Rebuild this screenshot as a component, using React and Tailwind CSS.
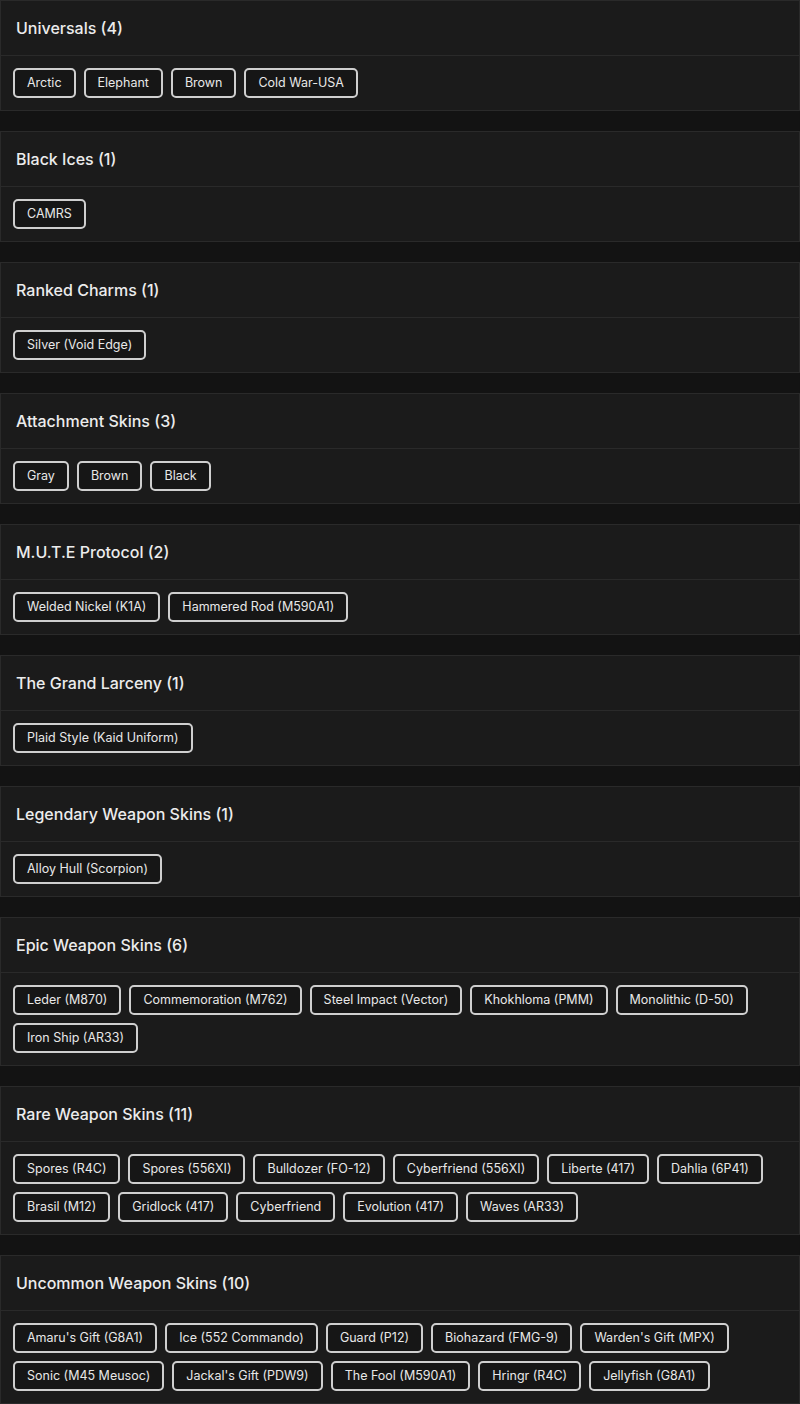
import React from "react";

const sections = [
  { title: "Universals (4)", items: ["Arctic", "Elephant", "Brown", "Cold War-USA"] },
  { title: "Black Ices (1)", items: ["CAMRS"] },
  { title: "Ranked Charms (1)", items: ["Silver (Void Edge)"] },
  { title: "Attachment Skins (3)", items: ["Gray", "Brown", "Black"] },
  { title: "M.U.T.E Protocol (2)", items: ["Welded Nickel (K1A)", "Hammered Rod (M590A1)"] },
  { title: "The Grand Larceny (1)", items: ["Plaid Style (Kaid Uniform)"] },
  { title: "Legendary Weapon Skins (1)", items: ["Alloy Hull (Scorpion)"] },
  {
    title: "Epic Weapon Skins (6)",
    items: [
      "Leder (M870)",
      "Commemoration (M762)",
      "Steel Impact (Vector)",
      "Khokhloma (PMM)",
      "Monolithic (D-50)",
      "Iron Ship (AR33)",
    ],
  },
  {
    title: "Rare Weapon Skins (11)",
    items: [
      "Spores (R4C)",
      "Spores (556XI)",
      "Bulldozer (FO-12)",
      "Cyberfriend (556XI)",
      "Liberte (417)",
      "Dahlia (6P41)",
      "Brasil (M12)",
      "Gridlock (417)",
      "Cyberfriend",
      "Evolution (417)",
      "Waves (AR33)",
    ],
  },
  {
    title: "Uncommon Weapon Skins (10)",
    items: [
      "Amaru's Gift (G8A1)",
      "Ice (552 Commando)",
      "Guard (P12)",
      "Biohazard (FMG-9)",
      "Warden's Gift (MPX)",
      "Sonic (M45 Meusoc)",
      "Jackal's Gift (PDW9)",
      "The Fool (M590A1)",
      "Hringr (R4C)",
      "Jellyfish (G8A1)",
    ],
  },
];

export default function App() {
  return (
    <div
      className="min-h-[1404px] w-[800px] bg-[#131313] flex flex-col gap-5 text-[#e6e6e6]"
      style={{ fontFamily: "Inter, 'Open Sans', sans-serif" }}
    >
      {sections.map((s) => (
        <section key={s.title} className="border border-[#2a2a2a] bg-[#1b1b1b]">
          <div className="h-[55px] flex items-center pl-[15px] border-b border-[#2a2a2a]">
            <h2 className="text-[16px] font-medium text-[#ececec]">{s.title}</h2>
          </div>
          <div className="p-3 flex flex-wrap gap-2">
            {s.items.map((it, i) => (
              <span
                key={i}
                className="h-[30px] flex items-center px-3 border-2 border-[#cfcfcf] rounded-[5px] bg-[#161616] text-[12.5px] text-[#e8e8e8]"
              >
                {it}
              </span>
            ))}
          </div>
        </section>
      ))}
    </div>
  );
}
